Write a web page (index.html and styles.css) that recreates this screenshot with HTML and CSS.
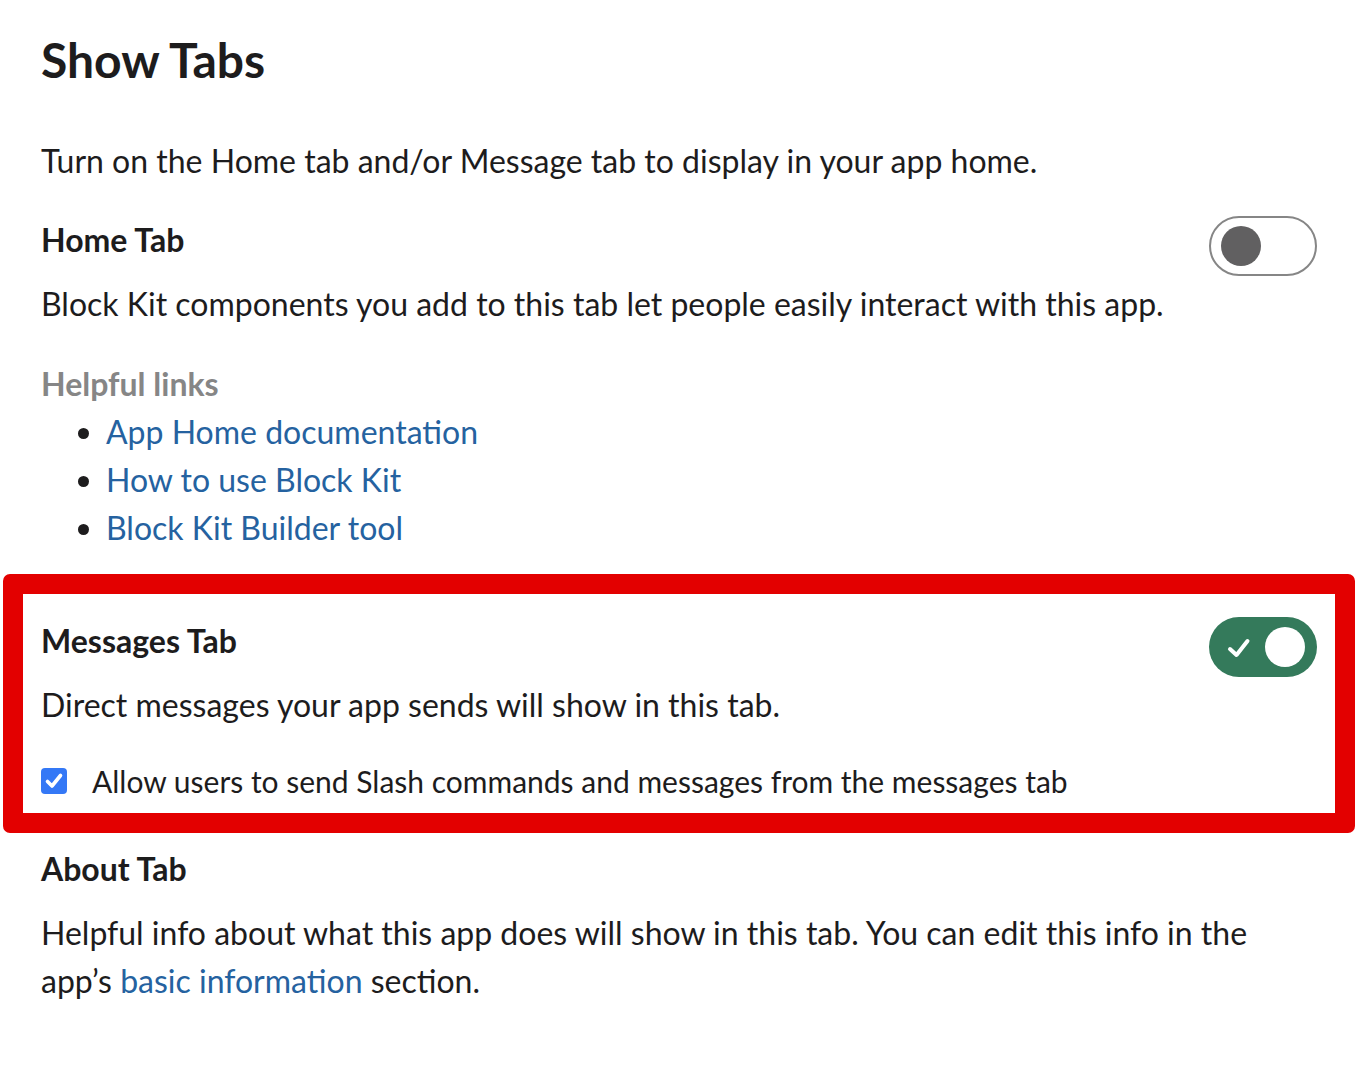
FILE: index.html
```html
<!DOCTYPE html>
<html lang="en">
<head>
<meta charset="utf-8">
<title>Show Tabs</title>
<link rel="stylesheet" href="styles.css">
</head>
<body>
<main class="page">
  <h1 class="page-title">Show Tabs</h1>
  <p class="intro">Turn on the Home tab and/or Message tab to display in your app home.</p>

  <section class="tab-section">
    <div class="tab-head">
      <h2 class="tab-title">Home Tab</h2>
      <span class="toggle toggle-off" role="switch" aria-checked="false"><span class="knob"></span></span>
    </div>
    <p class="tab-desc">Block Kit components you add to this tab let people easily interact with this app.</p>
    <h3 class="links-title">Helpful links</h3>
    <ul class="links">
      <li><a href="#">App Home documentation</a></li>
      <li><a href="#">How to use Block Kit</a></li>
      <li><a href="#">Block Kit Builder tool</a></li>
    </ul>
  </section>

  <section class="tab-section highlight">
    <div class="tab-head">
      <h2 class="tab-title">Messages Tab</h2>
      <span class="toggle toggle-on" role="switch" aria-checked="true">
        <svg class="toggle-check" width="26" height="24" viewBox="0 0 26 24"><path d="M4 13 L10.5 19 L21.5 5" fill="none" stroke="#fff" stroke-width="4" stroke-linecap="round" stroke-linejoin="round"/></svg>
        <span class="knob"></span>
      </span>
    </div>
    <p class="tab-desc">Direct messages your app sends will show in this tab.</p>
    <label class="check-row">
      <span class="checkbox"><svg width="26" height="26" viewBox="0 0 26 26"><path d="M6.5 13.5 L11 18 L19.5 7.5" fill="none" stroke="#fff" stroke-width="3.6" stroke-linecap="round" stroke-linejoin="round"/></svg></span>
      <span class="check-label">Allow users to send Slash commands and messages from the messages tab</span>
    </label>
  </section>

  <section class="tab-section about">
    <div class="tab-head">
      <h2 class="tab-title">About Tab</h2>
    </div>
    <p class="tab-desc">Helpful info about what this app does will show in this tab. You can edit this info in the app’s <a href="#">basic information</a> section.</p>
  </section>
</main>
</body>
</html>
```

FILE: styles.css
```css
* { box-sizing: border-box; }

html, body {
  margin: 0;
  padding: 0;
  background: #ffffff;
}

body {
  font-family: Lato, "Noto Sans", "Liberation Sans", sans-serif;
  color: #1d1c1d;
  font-size: 32px;
  line-height: 48px;
}

.page {
  padding: 30px 42px 40px 41px;
}

.page-title {
  margin: 0;
  font-size: 48px;
  line-height: 60px;
  font-weight: 700;
  color: #1d1c1d;
}

.intro {
  margin: 47px 0 0;
}

.tab-section {
  margin-top: 31px;
}

.tab-head {
  display: flex;
  justify-content: space-between;
  align-items: flex-start;
  height: 48px;
}

.tab-title {
  margin: 0;
  font-size: 32px;
  line-height: 48px;
  font-weight: 700;
}

.tab-desc {
  margin: 16px 0 0;
}

.links-title {
  margin: 32px 0 0;
  font-size: 32px;
  line-height: 48px;
  font-weight: 700;
  color: #868686;
}

.links {
  margin: 0;
  padding-left: 65px;
}

a {
  color: #2562a0;
  text-decoration: none;
}

.toggle {
  flex: none;
  width: 108px;
  height: 60px;
  border-radius: 30px;
  display: flex;
  align-items: center;
}

.toggle-off {
  border: 2px solid #868686;
  padding-left: 10px;
  background: #fff;
}

.toggle-off .knob {
  width: 40px;
  height: 40px;
  border-radius: 50%;
  background: #616061;
}

.toggle-on {
  background: #347a5b;
  padding: 0 12px 0 17px;
  justify-content: space-between;
}

.toggle-on .knob {
  width: 40px;
  height: 40px;
  border-radius: 50%;
  background: #fff;
}

.toggle-check {
  display: block;
  margin-top: 2px;
}

.highlight {
  margin: 22px -38px 0;
  padding: 23px 18px 8px;
  border: 20px solid #e30000;
  border-radius: 7px;
}

.check-row {
  display: flex;
  align-items: center;
  gap: 25px;
  margin-top: 28px;
  height: 48px;
  font-size: 30px;
}

.checkbox {
  flex: none;
  width: 26px;
  height: 26px;
  border-radius: 4px;
  background: #3478f6;
  display: flex;
}

.checkbox svg { display: block; }

.about {
  margin-top: 12px;
}
```
